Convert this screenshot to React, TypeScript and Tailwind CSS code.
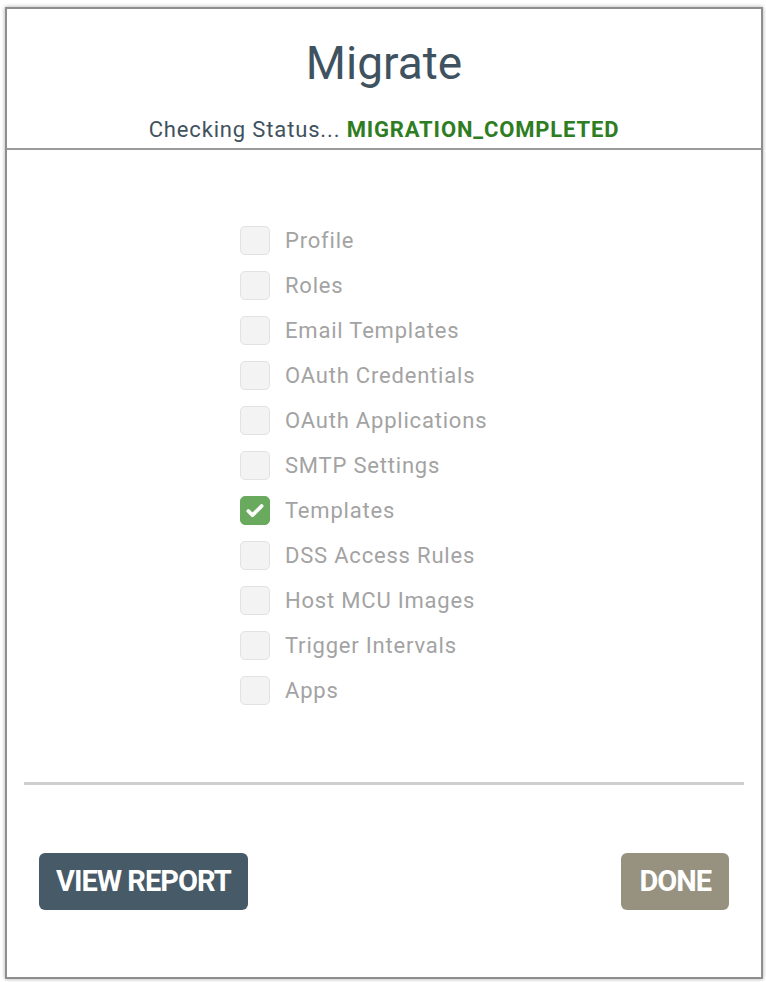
import { Check } from 'lucide-react';

const items = [
  { label: 'Profile', checked: false },
  { label: 'Roles', checked: false },
  { label: 'Email Templates', checked: false },
  { label: 'OAuth Credentials', checked: false },
  { label: 'OAuth Applications', checked: false },
  { label: 'SMTP Settings', checked: false },
  { label: 'Templates', checked: true },
  { label: 'DSS Access Rules', checked: false },
  { label: 'Host MCU Images', checked: false },
  { label: 'Trigger Intervals', checked: false },
  { label: 'Apps', checked: false },
];

const App = () => {
  return (
    <div className="min-h-screen bg-white pt-[7px] pl-[5px] font-['Roboto','Liberation_Sans',sans-serif]">
      <div className="w-[758px] h-[972px] border-2 border-[#8e8e8e] shadow-[0_0_4px_rgba(0,0,0,0.35)] bg-white flex flex-col">
        {/* Header */}
        <div className="border-b-2 border-[#9a9a9a] pt-[27px] pb-[5px] text-center">
          <h1 className="text-[46px] leading-[54px] text-[#3f5260]">Migrate</h1>
          <p className="mt-[27px] text-[22px] leading-[26px] tracking-[0.85px] text-[#3f5260]">
            Checking Status... <span className="font-bold text-[#2f7d23]">MIGRATION_COMPLETED</span>
          </p>
        </div>

        {/* Items */}
        <div className="pt-[68px] pl-[233px]">
          {items.map((item) => (
            <label key={item.label} className="flex items-center h-[45px] gap-[15px]">
              <span
                className={`w-[30px] h-[29px] rounded-[5px] border flex items-center justify-center ${
                  item.checked ? 'bg-[#6aaa5e] border-[#6aaa5e]' : 'bg-[#f3f3f3] border-[#e2e2e2]'
                }`}
              >
                {item.checked && <Check size={20} strokeWidth={4.5} className="text-white" />}
              </span>
              <span className="text-[22px] tracking-[0.8px] text-[#a3a3a3]">{item.label}</span>
            </label>
          ))}
        </div>

        {/* Footer */}
        <div className="mt-auto mx-[17px] border-t-[3px] border-[#cfcfcf]" />
        <div className="flex justify-between px-[32px] pt-[68px] pb-[67px]">
          <button className="h-[57px] px-[17px] rounded-[6px] bg-[#475a67] text-white text-[29px] font-bold tracking-[-1px]">
            VIEW REPORT
          </button>
          <button className="h-[57px] px-[18px] rounded-[6px] bg-[#96927f] text-white text-[29px] font-bold tracking-[-1px]">
            DONE
          </button>
        </div>
      </div>
    </div>
  );
};

export default App;
